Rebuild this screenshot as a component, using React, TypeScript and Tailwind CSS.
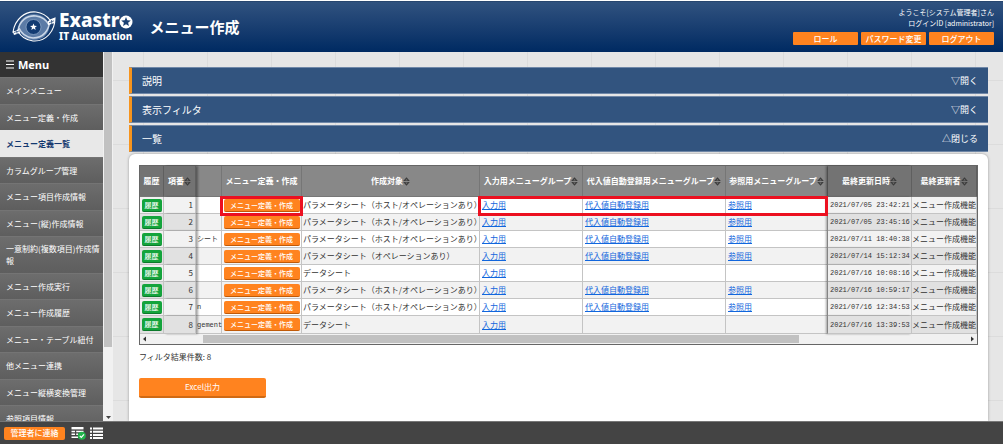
import React from "react";

type Row = {
  id: number;
  clipped: string;
  target: string;
  groups: [string, string, string];
  updated: string;
};

const FULL: [string, string, string] = ["入力用", "代入値自動登録用", "参照用"];
const INPUT_ONLY: [string, string, string] = ["入力用", "", ""];
const HOST_OP = "パラメータシート（ホスト/オペレーションあり）";

const rows: Row[] = [
  { id: 1, clipped: "", target: HOST_OP, groups: FULL, updated: "2021/07/05 23:42:21" },
  { id: 2, clipped: "", target: HOST_OP, groups: FULL, updated: "2021/07/05 23:45:16" },
  { id: 3, clipped: "シート", target: HOST_OP, groups: FULL, updated: "2021/07/11 18:40:38" },
  { id: 4, clipped: "", target: "パラメータシート（オペレーションあり）", groups: FULL, updated: "2021/07/14 15:12:34" },
  { id: 5, clipped: "", target: "データシート", groups: INPUT_ONLY, updated: "2021/07/16 10:08:16" },
  { id: 6, clipped: "", target: HOST_OP, groups: FULL, updated: "2021/07/16 10:59:17" },
  { id: 7, clipped: "n", target: HOST_OP, groups: FULL, updated: "2021/07/16 12:34:53" },
  { id: 8, clipped: "gement", target: "データシート", groups: INPUT_ONLY, updated: "2021/07/16 13:39:53" },
];

const menu = [
  "メインメニュー",
  "メニュー定義・作成",
  "メニュー定義一覧",
  "カラムグループ管理",
  "メニュー項目作成情報",
  "メニュー(縦)作成情報",
  "一意制約(複数項目)作成情報",
  "メニュー作成実行",
  "メニュー作成履歴",
  "メニュー・テーブル紐付",
  "他メニュー連携",
  "メニュー縦横変換管理",
  "参照項目情報",
];

const STAR = "M0 -5 L1.3 -1.7 L4.8 -1.5 L2.1 0.7 L3 4.1 L0 2.2 L-3 4.1 L-2.1 0.7 L-4.8 -1.5 L-1.3 -1.7 Z";

function LogoMark() {
  return (
    <svg width="44" height="32" viewBox="0 0 44 32" aria-hidden="true">
      <ellipse cx="22" cy="16" rx="15" ry="13" fill="#5b7ba6" />
      <path d="M1 21 C3 8 13 0 24 1 C31 2 35 5 38 9 L43 7 C43 20 34 31 21 30 C13 29 9 26 6 20 Z" fill="none" stroke="#fff" strokeWidth="1.1" />
      <path d="M6 20 C7 10 15 4 24 5 C31 6 35 10 37 14" fill="none" stroke="#c9d6e6" strokeWidth="1.6" />
      <path d="M38 9 C37 20 31 27 21 27 C13 26 9 22 7 17" fill="none" stroke="#c9d6e6" strokeWidth="1.6" />
      <path d="M1 21 L7 18 L8 22 L2 24 Z M36 10 L43 7 L43 12 L36 14 Z" fill="#fff" />
      <path d="M2 21.5 L7 20 M4.5 19.5 L5.2 23 M37 11.8 L42 9.8 M39.5 9 L39.8 13" stroke="#1e4477" strokeWidth="0.7" />
      <circle cx="21.5" cy="16" r="7.5" fill="#123b72" stroke="#8ca6c6" strokeWidth="0.8" />
      <path d={STAR} transform="translate(21.5 16) scale(.72)" fill="#fff" />
    </svg>
  );
}

function SortIcon() {
  return (
    <svg width="7" height="9" viewBox="0 0 7 9" className="shrink-0" aria-hidden="true">
      <path d="M3.5 0.3 L6.8 4 H0.2 Z M3.5 8.7 L6.8 5 H0.2 Z" fill="#3c3c3c" />
      <path d="M3.5 2 L4.7 3.4 H2.3 Z M3.5 7 L4.7 5.6 H2.3 Z" fill="#777" />
    </svg>
  );
}

function Bar({ title, action }: { title: string; action: string }) {
  return (
    <section className="flex h-[27px] items-center justify-between border-y border-l-3 border-y-[#7088a8] border-l-[#f7941d] bg-[#32547f] pr-2.5 pl-2.5 text-white">
      <h2 className="text-[10px] leading-4">{title}</h2>
      <button type="button" className="text-[9px] leading-4">{action}</button>
    </section>
  );
}

function Th({ children, sort = false, fixed = false, edge = "" }: { children?: React.ReactNode; sort?: boolean; fixed?: boolean; edge?: string }) {
  return (
    <th scope="col" className={`border-r border-b border-b-[#777] p-0 font-bold ${fixed ? "border-r-[#5f5f5f] bg-[#737373]" : "border-r-[#767676] bg-[#888]"} ${edge}`}>
      <span className="flex items-center justify-center">
        {children}
        {sort && <SortIcon />}
      </span>
    </th>
  );
}

const EDGE_LEFT = "relative z-10 shadow-[2px_0_2px_rgba(0,0,0,0.35)]";
const EDGE_RIGHT = "relative z-10 shadow-[-2px_0_2px_rgba(0,0,0,0.35)]";
const CELL = "border-r border-b border-[#c4c4c4] p-0";

export default function App() {
  return (
    <div className="flex h-screen flex-col overflow-hidden bg-white pt-px pr-px font-['Noto_Sans_CJK_JP',sans-serif] text-[8px] leading-3 text-[#333]">
      <header className="flex h-[51px] shrink-0 justify-between border-t border-[#27466f] bg-linear-to-b from-[#30527f] to-[#002a62] pr-[9px] text-white">
        <div className="flex items-center pl-3">
          <LogoMark />
          <div className="ml-[3px] font-['Noto_Sans',sans-serif] font-extrabold">
            <div className="flex items-center text-[19px] leading-[18px]">
              Exastr
              <svg width="14" height="14" viewBox="-7 -7 14 14" className="mt-1" role="img" aria-label="o">
                <circle r="6.5" fill="#fff" />
                <path d={STAR} fill="#1c4174" />
              </svg>
            </div>
            <div className="text-[10px] leading-[14px]">IT Automation</div>
          </div>
          <h1 className="ml-4 text-[15px] leading-6 font-bold">メニュー作成</h1>
        </div>
        <div className="flex flex-col items-end pt-[5px] text-right">
          <p className="text-[7px] leading-[11px]">ようこそ[システム管理者]さん</p>
          <p className="text-[7px] leading-[11px]">ログインID [administrator]</p>
          <div className="mt-[3px] flex gap-[3px]">
            {["ロール", "パスワード変更", "ログアウト"].map((label) => (
              <button key={label} type="button" className="h-[13px] w-[65px] rounded-[1px] bg-[#ff831f] leading-[13px] font-medium">
                {label}
              </button>
            ))}
          </div>
        </div>
      </header>

      <div className="flex min-h-0 flex-1">
        <nav className="w-[103px] shrink-0 overflow-hidden bg-[#666] text-white" aria-label="Menu">
          <div className="flex h-[25px] items-center gap-1 bg-[#333] pl-1.5">
            <svg width="8" height="9" viewBox="0 0 8 9" aria-hidden="true">
              <path d="M0 1 H8 M0 4.5 H8 M0 8 H8" stroke="#fff" strokeWidth="1.2" />
            </svg>
            <span className="font-['Open_Sans',sans-serif] text-[11px] font-bold">Menu</span>
          </div>
          <ul>
            {menu.map((item) => (
              <li key={item} className="flex odd:min-h-[27px] even:min-h-[26px]">
                <a
                  href="#"
                  aria-current={item === "メニュー定義一覧" ? "page" : undefined}
                  className={`flex flex-1 items-center py-1.5 pr-0.5 pl-1.5 ${
                    item === "メニュー定義一覧"
                      ? "bg-[#e8e8e8] font-bold text-[#14386f]"
                      : "border-t border-[#747474] bg-linear-to-b from-[#6d6d6d] to-[#5e5e5e]"
                  }`}
                >
                  {item}
                </a>
              </li>
            ))}
          </ul>
        </nav>
        <div className="flex w-2.5 shrink-0 flex-col justify-between bg-[#f1f1f1] pl-px" aria-hidden="true">
          <div className="h-4/5 w-2 bg-[#c1c1c1]" />
          <svg width="9" height="6" viewBox="0 0 9 6">
            <path d="M2 1 H7 L4.5 4 Z" fill="#444" />
          </svg>
        </div>

        <main className="flex min-w-0 flex-1 flex-col gap-0.5 overflow-hidden bg-[#e6e6e6] bg-[linear-gradient(#dcdcdc_1px,transparent_1px),linear-gradient(90deg,#dcdcdc_1px,transparent_1px)] bg-size-[64px_64px] bg-position-[30px_28px] px-4 pt-[15px] pr-[15px]">
          <Bar title="説明" action="▽開く" />
          <Bar title="表示フィルタ" action="▽開く" />
          <Bar title="一覧" action="△閉じる" />
          <div className="flex-1 rounded-t-md bg-white px-2.5 pt-[11px] shadow-[0_0_3px_rgba(0,0,0,0.35)]">
            <div className="border border-[#666]">
              <table className="w-full table-fixed border-separate border-spacing-0 whitespace-nowrap">
                <colgroup>
                  <col className="w-6" />
                  <col className="w-8" />
                  <col className="w-[26px]" />
                  <col className="w-20" />
                  <col />
                  <col className="w-[103px]" />
                  <col className="w-[143px]" />
                  <col className="w-[102px]" />
                  <col className="w-[84px]" />
                  <col className="w-[65px]" />
                </colgroup>
                <thead className="text-white">
                  <tr className="h-[31px]">
                    <Th fixed>履歴</Th>
                    <Th fixed sort edge={EDGE_LEFT}>項番</Th>
                    <Th />
                    <Th>メニュー定義・作成</Th>
                    <Th sort>作成対象</Th>
                    <Th sort>入力用メニューグループ</Th>
                    <Th sort>代入値自動登録用メニューグループ</Th>
                    <Th sort>参照用メニューグループ</Th>
                    <Th fixed sort edge={EDGE_RIGHT}>最終更新日時</Th>
                    <Th fixed sort>最終更新者</Th>
                  </tr>
                </thead>
                <tbody>
                  {rows.map((row) => {
                    const even = row.id % 2 === 0;
                    const fixed = even ? "bg-[#e1e1e1]" : "bg-[#f2f2f2]";
                    return (
                      <tr key={row.id} className={`h-[17px] last:h-[18px] ${even ? "bg-[#f2f2f2]" : "bg-white"}`}>
                        <td className={`${CELL} ${fixed}`}>
                          <button type="button" className="mx-auto block h-[13px] w-5 rounded-xs border-b border-[#0c7a2b] bg-[#14a43c] text-[7px] leading-3 font-medium text-white">
                            履歴
                          </button>
                        </td>
                        <td className={`${CELL} ${fixed} ${EDGE_LEFT} pr-0.5 text-right`}>{row.id}</td>
                        <td className={`${CELL} pl-px font-['Liberation_Mono','Noto_Sans_CJK_JP',monospace] text-[7px]`}>{row.clipped}</td>
                        <td className={`${CELL} relative`}>
                          <button type="button" className="mx-auto block h-[13px] w-[76px] rounded-xs border-b border-[#c05a08] bg-[#ff831f] text-[7px] leading-3 font-medium text-white">
                            メニュー定義・作成
                          </button>
                          {row.id === 1 && <span className="pointer-events-none absolute -inset-x-0.5 -top-px -bottom-[3px] z-20 border-3 border-[#ec1020]" />}
                        </td>
                        <td className={`${CELL} pl-px`}>{row.target}</td>
                        {row.groups.map((group, index) => (
                          <td key={index} className={`${CELL} relative pl-0.5`}>
                            {group && <a href="#" className="text-[#1166dd] underline">{group}</a>}
                            {row.id === 1 && index === 0 && (
                              <span className="pointer-events-none absolute -top-px -bottom-[3px] -left-0.5 z-20 w-[350px] border-3 border-[#ec1020]" />
                            )}
                          </td>
                        ))}
                        <td className={`${CELL} ${fixed} ${EDGE_RIGHT} pl-0.5 font-['Liberation_Mono',monospace] text-[7px]`}>{row.updated}</td>
                        <td className={`${CELL} ${fixed} text-center`}>メニュー作成機能</td>
                      </tr>
                    );
                  })}
                </tbody>
              </table>
              <div className="flex h-2.5 items-center justify-between bg-[#f1f1f1] px-0.5" aria-hidden="true">
                <svg width="5" height="6" viewBox="0 0 5 6"><path d="M4 0.5 V5.5 L1 3 Z" fill="#333" /></svg>
                <div className="mr-auto ml-14 h-2 w-[596px] bg-[#c1c1c1]" />
                <svg width="5" height="6" viewBox="0 0 5 6"><path d="M1 0.5 V5.5 L4 3 Z" fill="#333" /></svg>
              </div>
            </div>
            <p className="mt-1.5">フィルタ結果件数: 8</p>
            <button type="button" className="mt-[15px] block h-5 w-[127px] rounded-xs border-b-2 border-[#d06a14] bg-[#ff831f] text-white">
              Excel出力
            </button>
          </div>
        </main>
      </div>

      <footer className="flex h-[23px] shrink-0 items-center border-t border-[#777] bg-[#444] pl-1">
        <button type="button" className="h-[13px] w-[61px] rounded-xs bg-[#ff831f] font-medium text-white">
          管理者に連絡
        </button>
        <button type="button" aria-label="状態" className="ml-1.5">
          <svg width="15" height="14" viewBox="0 0 15 14">
            <path d="M0.5 1 H12.5 V3.4 H0.5 Z" fill="#fff" />
            <path d="M0.5 5.5 H4 M5.2 5.5 H12.5 M0.5 8.3 H4 M5.2 8.3 H7 M0.5 11.2 H7" stroke="#fff" strokeWidth="1.5" />
            <circle cx="10.8" cy="9.8" r="4" fill="#21b34b" />
            <path d="M8.8 9.8 L10.3 11.3 L13 8.4" fill="none" stroke="#fff" strokeWidth="1.2" />
          </svg>
        </button>
        <button type="button" aria-label="一覧表示" className="ml-1">
          <svg width="13" height="13" viewBox="0 0 13 13">
            <path d="M0 1.5 H2 M3 1.5 H13 M0 4.7 H2 M3 4.7 H13 M0 7.9 H2 M3 7.9 H13 M0 11.1 H2 M3 11.1 H13" stroke="#fff" strokeWidth="2" />
          </svg>
        </button>
      </footer>
    </div>
  );
}
